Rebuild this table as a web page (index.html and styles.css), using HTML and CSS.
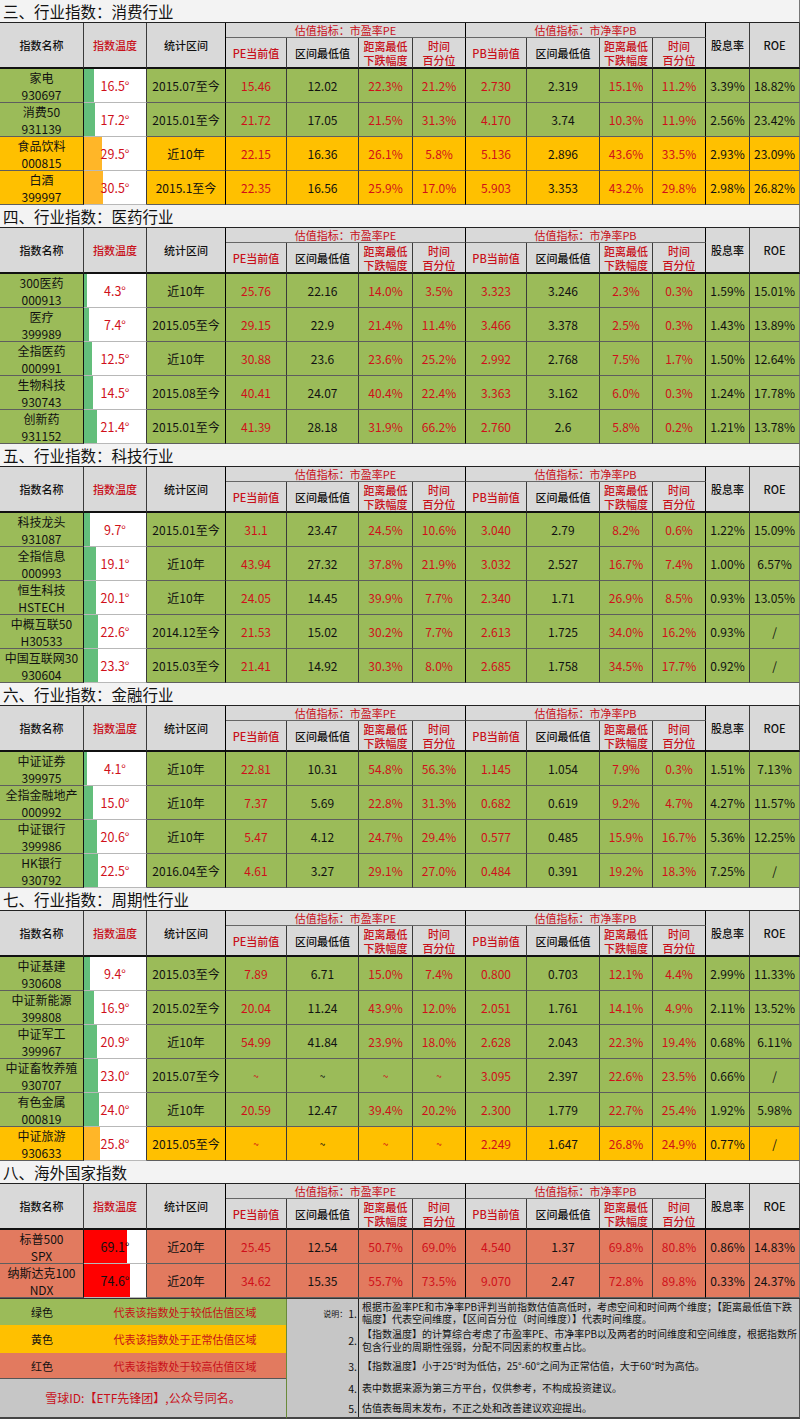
FILE: index.html
```html
<!DOCTYPE html>
<html lang="zh">
<head>
<meta charset="utf-8">
<title>指数估值表</title>
<link rel="stylesheet" href="styles.css">
</head>
<body>

<section class="sec">
  <h2 class="sec-title">三、行业指数：消费行业</h2>
  <div class="grid">
    <div class="h hs">指数名称</div><div class="h hs red">指数温度</div><div class="h hs">统计区间</div>
    <div class="h grp red">估值指标：市盈率PE</div><div class="h grp red">估值指标：市净率PB</div>
    <div class="h hs">股息率</div><div class="h hs last">ROE</div>
    <div class="h sub red">PE当前值</div><div class="h sub">区间最低值</div><div class="h sub red">距离最低<br>下跌幅度</div><div class="h sub red sep">时间<br>百分位</div>
    <div class="h sub red">PB当前值</div><div class="h sub">区间最低值</div><div class="h sub red">距离最低<br>下跌幅度</div><div class="h sub red sep">时间<br>百分位</div>

    <div class="row g"><div class="c">家电<br>930697</div><div class="c t" style="--w:16.5%">16.5°</div><div class="c">2015.07至今</div><div class="c">15.46</div><div class="c">12.02</div><div class="c">22.3%</div><div class="c">21.2%</div><div class="c">2.730</div><div class="c">2.319</div><div class="c">15.1%</div><div class="c">11.2%</div><div class="c">3.39%</div><div class="c">18.82%</div></div>
    <div class="row g"><div class="c">消费50<br>931139</div><div class="c t" style="--w:17.2%">17.2°</div><div class="c">2015.01至今</div><div class="c">21.72</div><div class="c">17.05</div><div class="c">21.5%</div><div class="c">31.3%</div><div class="c">4.170</div><div class="c">3.74</div><div class="c">10.3%</div><div class="c">11.9%</div><div class="c">2.56%</div><div class="c">23.42%</div></div>
    <div class="row y"><div class="c">食品饮料<br>000815</div><div class="c t" style="--w:29.5%">29.5°</div><div class="c">近10年</div><div class="c">22.15</div><div class="c">16.36</div><div class="c">26.1%</div><div class="c">5.8%</div><div class="c">5.136</div><div class="c">2.896</div><div class="c">43.6%</div><div class="c">33.5%</div><div class="c">2.93%</div><div class="c">23.09%</div></div>
    <div class="row y"><div class="c">白酒<br>399997</div><div class="c t" style="--w:30.5%">30.5°</div><div class="c">2015.1至今</div><div class="c">22.35</div><div class="c">16.56</div><div class="c">25.9%</div><div class="c">17.0%</div><div class="c">5.903</div><div class="c">3.353</div><div class="c">43.2%</div><div class="c">29.8%</div><div class="c">2.98%</div><div class="c">26.82%</div></div>
  </div>
</section>

<section class="sec">
  <h2 class="sec-title">四、行业指数：医药行业</h2>
  <div class="grid">
    <div class="h hs">指数名称</div><div class="h hs red">指数温度</div><div class="h hs">统计区间</div>
    <div class="h grp red">估值指标：市盈率PE</div><div class="h grp red">估值指标：市净率PB</div>
    <div class="h hs">股息率</div><div class="h hs last">ROE</div>
    <div class="h sub red">PE当前值</div><div class="h sub">区间最低值</div><div class="h sub red">距离最低<br>下跌幅度</div><div class="h sub red sep">时间<br>百分位</div>
    <div class="h sub red">PB当前值</div><div class="h sub">区间最低值</div><div class="h sub red">距离最低<br>下跌幅度</div><div class="h sub red sep">时间<br>百分位</div>

    <div class="row g"><div class="c">300医药<br>000913</div><div class="c t" style="--w:4.3%">4.3°</div><div class="c">近10年</div><div class="c">25.76</div><div class="c">22.16</div><div class="c">14.0%</div><div class="c">3.5%</div><div class="c">3.323</div><div class="c">3.246</div><div class="c">2.3%</div><div class="c">0.3%</div><div class="c">1.59%</div><div class="c">15.01%</div></div>
    <div class="row g"><div class="c">医疗<br>399989</div><div class="c t" style="--w:7.4%">7.4°</div><div class="c">2015.05至今</div><div class="c">29.15</div><div class="c">22.9</div><div class="c">21.4%</div><div class="c">11.4%</div><div class="c">3.466</div><div class="c">3.378</div><div class="c">2.5%</div><div class="c">0.3%</div><div class="c">1.43%</div><div class="c">13.89%</div></div>
    <div class="row g"><div class="c">全指医药<br>000991</div><div class="c t" style="--w:12.5%">12.5°</div><div class="c">近10年</div><div class="c">30.88</div><div class="c">23.6</div><div class="c">23.6%</div><div class="c">25.2%</div><div class="c">2.992</div><div class="c">2.768</div><div class="c">7.5%</div><div class="c">1.7%</div><div class="c">1.50%</div><div class="c">12.64%</div></div>
    <div class="row g"><div class="c">生物科技<br>930743</div><div class="c t" style="--w:14.5%">14.5°</div><div class="c">2015.08至今</div><div class="c">40.41</div><div class="c">24.07</div><div class="c">40.4%</div><div class="c">22.4%</div><div class="c">3.363</div><div class="c">3.162</div><div class="c">6.0%</div><div class="c">0.3%</div><div class="c">1.24%</div><div class="c">17.78%</div></div>
    <div class="row g"><div class="c">创新药<br>931152</div><div class="c t" style="--w:21.4%">21.4°</div><div class="c">2015.01至今</div><div class="c">41.39</div><div class="c">28.18</div><div class="c">31.9%</div><div class="c">66.2%</div><div class="c">2.760</div><div class="c">2.6</div><div class="c">5.8%</div><div class="c">0.2%</div><div class="c">1.21%</div><div class="c">13.78%</div></div>
  </div>
</section>

<section class="sec">
  <h2 class="sec-title">五、行业指数：科技行业</h2>
  <div class="grid">
    <div class="h hs">指数名称</div><div class="h hs red">指数温度</div><div class="h hs">统计区间</div>
    <div class="h grp red">估值指标：市盈率PE</div><div class="h grp red">估值指标：市净率PB</div>
    <div class="h hs">股息率</div><div class="h hs last">ROE</div>
    <div class="h sub red">PE当前值</div><div class="h sub">区间最低值</div><div class="h sub red">距离最低<br>下跌幅度</div><div class="h sub red sep">时间<br>百分位</div>
    <div class="h sub red">PB当前值</div><div class="h sub">区间最低值</div><div class="h sub red">距离最低<br>下跌幅度</div><div class="h sub red sep">时间<br>百分位</div>

    <div class="row g"><div class="c">科技龙头<br>931087</div><div class="c t" style="--w:9.7%">9.7°</div><div class="c">2015.01至今</div><div class="c">31.1</div><div class="c">23.47</div><div class="c">24.5%</div><div class="c">10.6%</div><div class="c">3.040</div><div class="c">2.79</div><div class="c">8.2%</div><div class="c">0.6%</div><div class="c">1.22%</div><div class="c">15.09%</div></div>
    <div class="row g"><div class="c">全指信息<br>000993</div><div class="c t" style="--w:19.1%">19.1°</div><div class="c">近10年</div><div class="c">43.94</div><div class="c">27.32</div><div class="c">37.8%</div><div class="c">21.9%</div><div class="c">3.032</div><div class="c">2.527</div><div class="c">16.7%</div><div class="c">7.4%</div><div class="c">1.00%</div><div class="c">6.57%</div></div>
    <div class="row g"><div class="c">恒生科技<br>HSTECH</div><div class="c t" style="--w:20.1%">20.1°</div><div class="c">近10年</div><div class="c">24.05</div><div class="c">14.45</div><div class="c">39.9%</div><div class="c">7.7%</div><div class="c">2.340</div><div class="c">1.71</div><div class="c">26.9%</div><div class="c">8.5%</div><div class="c">0.93%</div><div class="c">13.05%</div></div>
    <div class="row g"><div class="c">中概互联50<br>H30533</div><div class="c t" style="--w:22.6%">22.6°</div><div class="c">2014.12至今</div><div class="c">21.53</div><div class="c">15.02</div><div class="c">30.2%</div><div class="c">7.7%</div><div class="c">2.613</div><div class="c">1.725</div><div class="c">34.0%</div><div class="c">16.2%</div><div class="c">0.93%</div><div class="c">/</div></div>
    <div class="row g"><div class="c">中国互联网30<br>930604</div><div class="c t" style="--w:23.3%">23.3°</div><div class="c">2015.03至今</div><div class="c">21.41</div><div class="c">14.92</div><div class="c">30.3%</div><div class="c">8.0%</div><div class="c">2.685</div><div class="c">1.758</div><div class="c">34.5%</div><div class="c">17.7%</div><div class="c">0.92%</div><div class="c">/</div></div>
  </div>
</section>

<section class="sec">
  <h2 class="sec-title">六、行业指数：金融行业</h2>
  <div class="grid">
    <div class="h hs">指数名称</div><div class="h hs red">指数温度</div><div class="h hs">统计区间</div>
    <div class="h grp red">估值指标：市盈率PE</div><div class="h grp red">估值指标：市净率PB</div>
    <div class="h hs">股息率</div><div class="h hs last">ROE</div>
    <div class="h sub red">PE当前值</div><div class="h sub">区间最低值</div><div class="h sub red">距离最低<br>下跌幅度</div><div class="h sub red sep">时间<br>百分位</div>
    <div class="h sub red">PB当前值</div><div class="h sub">区间最低值</div><div class="h sub red">距离最低<br>下跌幅度</div><div class="h sub red sep">时间<br>百分位</div>

    <div class="row g"><div class="c">中证证券<br>399975</div><div class="c t" style="--w:4.1%">4.1°</div><div class="c">近10年</div><div class="c">22.81</div><div class="c">10.31</div><div class="c">54.8%</div><div class="c">56.3%</div><div class="c">1.145</div><div class="c">1.054</div><div class="c">7.9%</div><div class="c">0.3%</div><div class="c">1.51%</div><div class="c">7.13%</div></div>
    <div class="row g"><div class="c">全指金融地产<br>000992</div><div class="c t" style="--w:15%">15.0°</div><div class="c">近10年</div><div class="c">7.37</div><div class="c">5.69</div><div class="c">22.8%</div><div class="c">31.3%</div><div class="c">0.682</div><div class="c">0.619</div><div class="c">9.2%</div><div class="c">4.7%</div><div class="c">4.27%</div><div class="c">11.57%</div></div>
    <div class="row g"><div class="c">中证银行<br>399986</div><div class="c t" style="--w:20.6%">20.6°</div><div class="c">近10年</div><div class="c">5.47</div><div class="c">4.12</div><div class="c">24.7%</div><div class="c">29.4%</div><div class="c">0.577</div><div class="c">0.485</div><div class="c">15.9%</div><div class="c">16.7%</div><div class="c">5.36%</div><div class="c">12.25%</div></div>
    <div class="row g"><div class="c">HK银行<br>930792</div><div class="c t" style="--w:22.5%">22.5°</div><div class="c">2016.04至今</div><div class="c">4.61</div><div class="c">3.27</div><div class="c">29.1%</div><div class="c">27.0%</div><div class="c">0.484</div><div class="c">0.391</div><div class="c">19.2%</div><div class="c">18.3%</div><div class="c">7.25%</div><div class="c">/</div></div>
  </div>
</section>

<section class="sec">
  <h2 class="sec-title">七、行业指数：周期性行业</h2>
  <div class="grid">
    <div class="h hs">指数名称</div><div class="h hs red">指数温度</div><div class="h hs">统计区间</div>
    <div class="h grp red">估值指标：市盈率PE</div><div class="h grp red">估值指标：市净率PB</div>
    <div class="h hs">股息率</div><div class="h hs last">ROE</div>
    <div class="h sub red">PE当前值</div><div class="h sub">区间最低值</div><div class="h sub red">距离最低<br>下跌幅度</div><div class="h sub red sep">时间<br>百分位</div>
    <div class="h sub red">PB当前值</div><div class="h sub">区间最低值</div><div class="h sub red">距离最低<br>下跌幅度</div><div class="h sub red sep">时间<br>百分位</div>

    <div class="row g"><div class="c">中证基建<br>930608</div><div class="c t" style="--w:9.4%">9.4°</div><div class="c">2015.03至今</div><div class="c">7.89</div><div class="c">6.71</div><div class="c">15.0%</div><div class="c">7.4%</div><div class="c">0.800</div><div class="c">0.703</div><div class="c">12.1%</div><div class="c">4.4%</div><div class="c">2.99%</div><div class="c">11.33%</div></div>
    <div class="row g"><div class="c">中证新能源<br>399808</div><div class="c t" style="--w:16.9%">16.9°</div><div class="c">2015.02至今</div><div class="c">20.04</div><div class="c">11.24</div><div class="c">43.9%</div><div class="c">12.0%</div><div class="c">2.051</div><div class="c">1.761</div><div class="c">14.1%</div><div class="c">4.9%</div><div class="c">2.11%</div><div class="c">13.52%</div></div>
    <div class="row g"><div class="c">中证军工<br>399967</div><div class="c t" style="--w:20.9%">20.9°</div><div class="c">近10年</div><div class="c">54.99</div><div class="c">41.84</div><div class="c">23.9%</div><div class="c">18.0%</div><div class="c">2.628</div><div class="c">2.043</div><div class="c">22.3%</div><div class="c">19.4%</div><div class="c">0.68%</div><div class="c">6.11%</div></div>
    <div class="row g"><div class="c">中证畜牧养殖<br>930707</div><div class="c t" style="--w:23%">23.0°</div><div class="c">2015.07至今</div><div class="c tl">~</div><div class="c tl">~</div><div class="c tl">~</div><div class="c tl">~</div><div class="c">3.095</div><div class="c">2.397</div><div class="c">22.6%</div><div class="c">23.5%</div><div class="c">0.66%</div><div class="c">/</div></div>
    <div class="row g"><div class="c">有色金属<br>000819</div><div class="c t" style="--w:24%">24.0°</div><div class="c">近10年</div><div class="c">20.59</div><div class="c">12.47</div><div class="c">39.4%</div><div class="c">20.2%</div><div class="c">2.300</div><div class="c">1.779</div><div class="c">22.7%</div><div class="c">25.4%</div><div class="c">1.92%</div><div class="c">5.98%</div></div>
    <div class="row y"><div class="c">中证旅游<br>930633</div><div class="c t" style="--w:25.8%">25.8°</div><div class="c">2015.05至今</div><div class="c tl">~</div><div class="c tl">~</div><div class="c tl">~</div><div class="c tl">~</div><div class="c">2.249</div><div class="c">1.647</div><div class="c">26.8%</div><div class="c">24.9%</div><div class="c">0.77%</div><div class="c">/</div></div>
  </div>
</section>

<section class="sec">
  <h2 class="sec-title">八、海外国家指数</h2>
  <div class="grid">
    <div class="h hs">指数名称</div><div class="h hs red">指数温度</div><div class="h hs">统计区间</div>
    <div class="h grp red">估值指标：市盈率PE</div><div class="h grp red">估值指标：市净率PB</div>
    <div class="h hs">股息率</div><div class="h hs last">ROE</div>
    <div class="h sub red">PE当前值</div><div class="h sub">区间最低值</div><div class="h sub red">距离最低<br>下跌幅度</div><div class="h sub red sep">时间<br>百分位</div>
    <div class="h sub red">PB当前值</div><div class="h sub">区间最低值</div><div class="h sub red">距离最低<br>下跌幅度</div><div class="h sub red sep">时间<br>百分位</div>

    <div class="row r"><div class="c">标普500<br>SPX</div><div class="c t" style="--w:69.1%">69.1°</div><div class="c">近20年</div><div class="c">25.45</div><div class="c">12.54</div><div class="c">50.7%</div><div class="c">69.0%</div><div class="c">4.540</div><div class="c">1.37</div><div class="c">69.8%</div><div class="c">80.8%</div><div class="c">0.86%</div><div class="c">14.83%</div></div>
    <div class="row r"><div class="c">纳斯达克100<br>NDX</div><div class="c t" style="--w:74.6%">74.6°</div><div class="c">近20年</div><div class="c">34.62</div><div class="c">15.35</div><div class="c">55.7%</div><div class="c">73.5%</div><div class="c">9.070</div><div class="c">2.47</div><div class="c">72.8%</div><div class="c">89.8%</div><div class="c">0.33%</div><div class="c">24.37%</div></div>
  </div>
</section>

<footer class="foot">
  <div class="legend">
    <div class="lg lg-g"><span class="lg-name">绿色</span><span class="lg-desc">代表该指数处于较低估值区域</span></div>
    <div class="lg lg-y"><span class="lg-name">黄色</span><span class="lg-desc">代表该指数处于正常估值区域</span></div>
    <div class="lg lg-r"><span class="lg-name">红色</span><span class="lg-desc">代表该指数处于较高估值区域</span></div>
    <div class="sig">雪球ID:【ETF先锋团】,公众号同名。</div>
  </div>
  <div class="notes">
    <div class="lbl"><small>说明：</small>1.</div>
    <p class="note">根据市盈率PE和市净率PB评判当前指数估值高低时，考虑空间和时间两个维度；【距离最低值下跌<br>幅度】代表空间维度，【区间百分位（时间维度）】代表时间维度。</p>
    <div class="lbl">2.</div>
    <p class="note">【指数温度】的计算综合考虑了市盈率PE、市净率PB以及两者的时间维度和空间维度，根据指数所<br>包含行业的周期性强弱，分配不同因素的权重占比。</p>
    <div class="lbl">3.</div>
    <p class="note">【指数温度】小于25°时为低估，25°-60°之间为正常估值，大于60°时为高估。</p>
    <div class="lbl">4.</div>
    <p class="note">表中数据来源为第三方平台，仅供参考，不构成投资建议。</p>
    <div class="lbl">5.</div>
    <p class="note">估值表每周末发布，不正之处和改善建议欢迎提出。</p>
  </div>
</footer>

</body>
</html>
```

FILE: styles.css
```css
* { box-sizing: border-box; }

body {
  margin: 0;
  width: 800px;
  background: #fff;
  color: #111;
  font-family: "Noto Sans CJK SC", "Microsoft YaHei", sans-serif;
}

.sec-title {
  margin: 0;
  height: 23px;
  padding-left: 3px;
  font-size: 15.5px;
  font-weight: 400;
  line-height: 22px;
  background: #f3f3f3;
  border-right: 1px solid #777;
  border-bottom: 1px solid #222;
}

.grid {
  display: grid;
  grid-template-columns: 84px 63px 79px 61px 72px 54px 53px 61px 73px 53px 53px 44px 50px;
  grid-template-rows: 15px 31px;
  grid-auto-rows: 34px;
}

.h,
.c {
  display: flex;
  align-items: center;
  justify-content: center;
  text-align: center;
  border-right: 1px solid #3a3a3a;
  border-bottom: 1px solid #5e5e5e;
}

.h {
  background: #d9d9d9;
  font-size: 11px;
  font-weight: 500;
  line-height: 14px;
  color: #111;
}

.hs {
  grid-row: span 2;
  border-bottom: 2px solid #111;
}

.hs:nth-child(3) { border-right-color: #000; }

.grp {
  grid-column: span 4;
  border-right-color: #000;
  border-bottom: 1px solid #666;
  font-weight: 400;
}

.sub {
  border-bottom: 2px solid #111;
}

.sep { border-right-color: #000; }

.h.red { color: #c8101a; }

.row { display: contents; }

.c {
  font-size: 12px;
  line-height: 17px;
  color: #111;
}

.row > :nth-child(1) { border-right-color: #111; }
.row > :nth-child(3),
.row > :nth-child(7),
.row > :nth-child(11) { border-right-color: #000; }

.row > :nth-child(2),
.row > :nth-child(4),
.row > :nth-child(6),
.row > :nth-child(7),
.row > :nth-child(8),
.row > :nth-child(10),
.row > :nth-child(11) { color: #d0101a; }

.row > :last-child { border-right-color: #777; }

.g > .c { background: #9bbb59; }
.y > .c { background: #ffc000; }
.r > .c { background: #e27a5f; }

.c.t {
  --bar: #63be7b;
  background: linear-gradient(90deg, var(--bar) 0 var(--w), #fff var(--w) 100%);
  border-bottom-color: #b8b8b8;
  font-size: 12.5px;
}
.y > .c.t { --bar: #ffb628; }
.r > .c.t { --bar: #ff0000; color: #111; }

.c.tl { font-size: 10px; }

/* footer legend + notes */
.foot {
  display: grid;
  grid-template-columns: 287px 513px;
  height: 121px;
  border-top: 1px solid #333;
}

.legend {
  display: grid;
  grid-template-rows: 26px 28px 25px 1fr;
  border-right: 1px solid #6a8a3a;
  border-bottom: 2px solid #444;
}

.lg {
  display: grid;
  grid-template-columns: 84px 1fr;
  align-items: center;
  text-align: center;
  font-size: 11px;
}
.lg-g { background: #9bbb59; }
.lg-y { background: #ffc000; }
.lg-r { background: #e27a5f; }
.lg-desc { color: #c8101a; }
.lg-name { color: #111; }

.sig {
  display: flex;
  align-items: center;
  justify-content: center;
  background: #c6c6c6;
  border-top: 1px solid #555;
  color: #c8101a;
  font-size: 12px;
  padding-bottom: 2px;
}

.notes {
  display: grid;
  grid-template-columns: 72px 1fr;
  grid-template-rows: 28px 27px 24px 21px 1fr;
  background: #c6c6c6;
  border-right: 1px solid #555;
  border-bottom: 2px solid #444;
}

.lbl {
  display: flex;
  align-items: center;
  justify-content: flex-end;
  padding-right: 1px;
  border-right: 1px solid #222;
  font-size: 10.5px;
  color: #111;
}
.lbl small { font-size: 8px; margin-right: 1px; }

.note {
  margin: 0;
  display: flex;
  align-items: center;
  padding-left: 3px;
  font-size: 10px;
  line-height: 12.5px;
  color: #111;
  white-space: nowrap;
  overflow: hidden;
}
```
